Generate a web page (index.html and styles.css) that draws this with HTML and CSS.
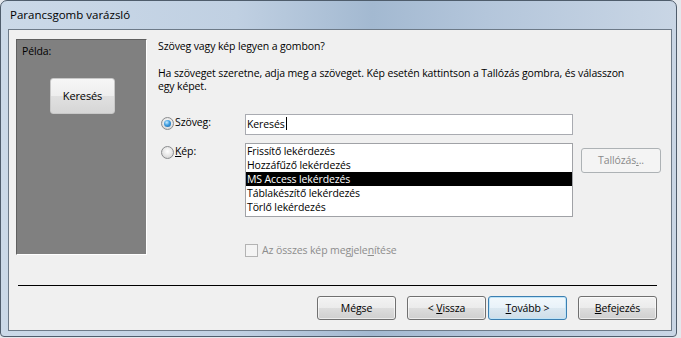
FILE: index.html
```html
<!DOCTYPE html>
<html lang="hu">
<head>
    <meta charset="UTF-8">
    <title>Parancsgomb varázsló</title>
    <link rel="stylesheet" href="styles.css">
</head>
<body>
    <div class="window">
        <div class="titlebar">Parancsgomb varázsló</div>

        <div class="client">
            <div class="top">
                <div class="preview">
                    <div class="preview-label">Példa:</div>
                    <div class="preview-button">Keresés</div>
                </div>

                <div class="content">
                    <p class="question">Szöveg vagy kép legyen a gombon?</p>
                    <p class="hint">Ha szöveget szeretne, adja meg a szöveget. Kép esetén kattintson a Tallózás gombra, és válasszon</p>
                    <p class="hint-end">egy képet.</p>

                    <div class="options">
                        <div class="option">
                            <span class="radio checked"></span>
                            <span>Szöve<u>g</u>:</span>
                        </div>
                        <div class="textbox">Keresés<span class="caret"></span></div>
                        <div></div>

                        <div class="option">
                            <span class="radio"></span>
                            <span><u>K</u>ép:</span>
                        </div>
                        <ul class="listbox">
                            <li>Frissítő lekérdezés</li>
                            <li>Hozzáfűző lekérdezés</li>
                            <li class="selected">MS Access lekérdezés</li>
                            <li>Táblakészítő lekérdezés</li>
                            <li>Törlő lekérdezés</li>
                        </ul>
                        <div class="btn disabled browse">Tallózás<u>.</u>..</div>

                        <div></div>
                        <div class="check-row">
                            <span class="checkbox"></span>
                            <span>Az összes kép megjele<u>n</u>ítése</span>
                        </div>
                    </div>
                </div>
            </div>

            <div class="separator"></div>

            <div class="buttons">
                <div class="btn">Mégse</div>
                <div class="btn back">&lt; <u>V</u>issza</div>
                <div class="btn focused"><u>T</u>ovább &gt;</div>
                <div class="btn finish"><u>B</u>efejezés</div>
            </div>
        </div>
    </div>
</body>
</html>
```

FILE: styles.css
```css
body {
    margin: 0;
    width: 681px;
    height: 338px;
    overflow: hidden;
    background-color: #e4e8ed;
    font-family: "Open Sans", "Noto Sans", sans-serif;
    font-size: 10.5px;
    letter-spacing: -0.12px;
    color: #000;
}

.window {
    width: 675px;
    height: 335px;
    border: 1px solid #4f5d6c;
    border-radius: 7px 7px 4px 4px;
    background: linear-gradient(to right, #cbd9e8 0%, #c0d0e2 35%, #a3b9d1 55%, #b4c6db 72%, #c9d6e5 100%);
}

.titlebar {
    height: 28px;
    line-height: 28px;
    padding-left: 9px;
    font-size: 11.5px;
    letter-spacing: 0;
}

.client {
    width: 662px;
    height: 300px;
    margin-left: 7px;
    background-color: #f0f0f0;
    border: 1px solid #6d7a88;
}

.top {
    display: flex;
    height: 225px;
    padding-top: 9px;
    padding-left: 7px;
    box-sizing: border-box;
}

.preview {
    width: 129px;
    height: 214px;
    background-color: #808080;
    border-top: 1px solid #5f5f5f;
    border-left: 1px solid #5f5f5f;
    border-right: 1px solid #ffffff;
    border-bottom: 1px solid #ffffff;
}

.preview-label {
    margin: 5px 0 0 5px;
    line-height: 13px;
}

.preview-button {
    width: 63px;
    height: 34px;
    margin: 20px 0 0 33px;
    line-height: 34px;
    text-align: center;
    font-size: 11px;
    border: 1px solid #c8c8c8;
    border-radius: 3px;
    background: linear-gradient(#f6f6f6 0%, #eeeeee 50%, #e0e0e0 51%, #d6d6d6 100%);
}

.content {
    margin-left: 11px;
}

.question {
    margin: 1px 0 0 0;
    line-height: 13px;
}

.hint {
    margin: 14px 0 0 0;
    line-height: 13px;
}

.hint-end {
    margin: 0;
    line-height: 13px;
}

.options {
    display: grid;
    grid-template-columns: 87px 328px 88px;
    row-gap: 8px;
    margin-top: 21px;
}

.option {
    display: flex;
    align-items: center;
    height: 13px;
    padding-top: 3px;
    padding-left: 3px;
    line-height: 13px;
}

.option span:last-child {
    margin-left: 1px;
    margin-top: -3px;
}

.radio {
    position: relative;
    width: 11px;
    height: 11px;
    border: 1px solid #8a8c8e;
    border-radius: 50%;
    background: radial-gradient(circle at 50% 40%, #ffffff 0%, #e4e4e4 55%, #c8c8c8 100%);
}

.radio.checked::after {
    content: "";
    position: absolute;
    left: 2px;
    top: 2px;
    width: 7px;
    height: 7px;
    border-radius: 50%;
    background: radial-gradient(circle at 40% 35%, #c9ecff 0%, #3e9de0 45%, #135c9c 100%);
}

.textbox {
    height: 19px;
    line-height: 19px;
    padding-left: 1px;
    background-color: #fff;
    border: 1px solid #a9abb1;
}

.caret {
    display: inline-block;
    width: 1px;
    height: 13px;
    margin-left: 1px;
    vertical-align: -2px;
    background-color: #000;
}

.listbox {
    list-style: none;
    height: 72px;
    margin: 0;
    padding: 0;
    background-color: #fff;
    border: 1px solid #a0a2a6;
}

.listbox li {
    height: 14px;
    line-height: 14px;
    padding-left: 1px;
}

.listbox li.selected {
    background-color: #000;
    color: #fff;
}

.btn {
    width: 77px;
    height: 22px;
    line-height: 22px;
    text-align: center;
    border: 1px solid #707070;
    border-radius: 3px;
    background: linear-gradient(#f3f3f3 0%, #ebebeb 50%, #dddddd 51%, #cfcfcf 100%);
    box-shadow: inset 0 0 0 1px rgba(255,255,255,0.6);
}

.btn.disabled {
    color: #8a8a8a;
    border-color: #adb2b5;
    background: #f4f4f4;
    box-shadow: none;
}

.browse {
    width: 78px;
    height: 23px;
    line-height: 23px;
    margin-left: 8px;
    margin-top: 5px;
}

.check-row {
    display: flex;
    align-items: center;
    margin-top: 18px;
    color: #8d8d8d;
}

.checkbox {
    width: 11px;
    height: 11px;
    margin-right: 4px;
    border: 1px solid #b3b3b3;
    background-color: #f4f4f4;
}

.separator {
    height: 1px;
    margin: 30px 14px 0 9px;
    background-color: #000;
}

.buttons {
    display: flex;
    justify-content: flex-end;
    margin: 10px 14px 0 0;
}

.buttons .back {
    margin-left: 11px;
}

.buttons .focused {
    margin-left: 2px;
    border-color: #3c7fb1;
    box-shadow: inset 0 0 0 1px #bfe4f8;
    background: linear-gradient(#f2f8fc 0%, #e8f2f9 50%, #dbe8f1 51%, #cfdde8 100%);
}

.buttons .finish {
    margin-left: 11px;
}
```
